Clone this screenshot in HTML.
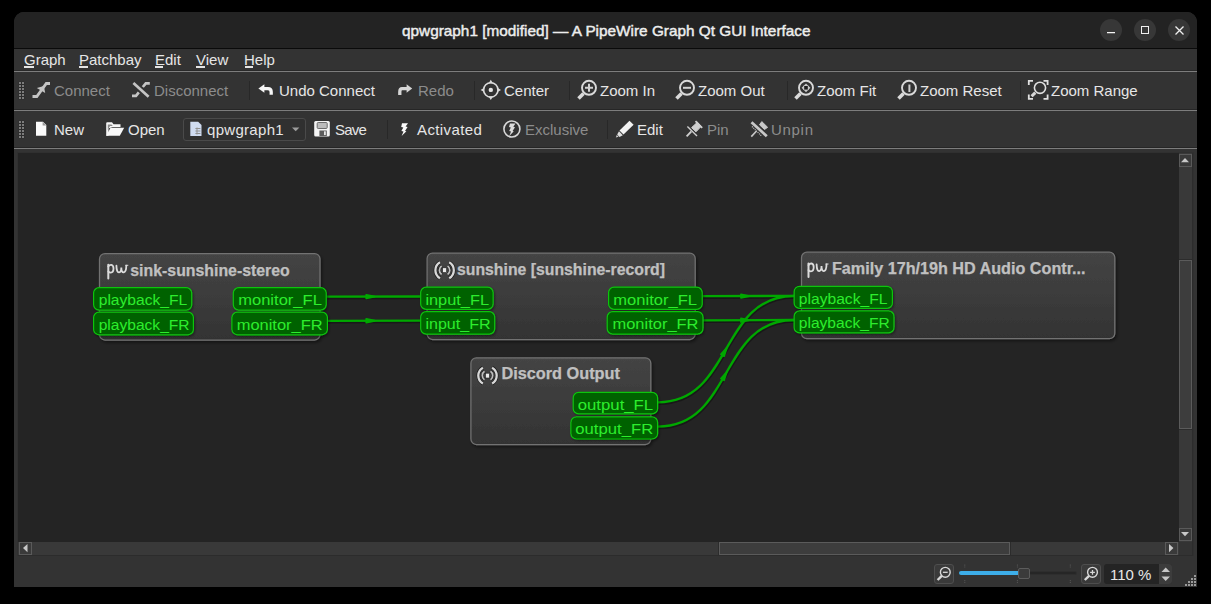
<!DOCTYPE html>
<html><head><meta charset="utf-8">
<style>
*{box-sizing:border-box}
html,body{margin:0;padding:0}
body{width:1211px;height:604px;overflow:hidden;position:relative;background:#000;font-family:"Liberation Sans",sans-serif;}
.a{position:absolute}
.t{position:absolute;white-space:nowrap;font-size:15px;line-height:15px;color:#e6e6e6}
.dis{color:#8c8c8c}
.sep{position:absolute;width:1px;background:#262626;border-right:1px solid #3c3c3c}
.port{position:absolute;height:24px;border:1.3px solid #0bc80b;background:#006100;border-radius:6px;color:#2df02d;font-size:15.5px;line-height:15px;white-space:nowrap}
.port span{position:absolute;top:5px}
.node{position:absolute;border:1px solid #656565;border-radius:6px;background:linear-gradient(#434343,#363636 60%,#303030)}
.nt{position:absolute;font-weight:bold;font-size:16px;line-height:16px;color:#c9c9c9;white-space:nowrap}
svg{position:absolute;overflow:visible}
.sb{position:absolute;width:13px;height:13px;background:#3a3a3a;border:1px solid #5a5a5a}
.btn{position:absolute;width:20px;height:20px;background:#3a3a3a;border:1px solid #4e4e4e;border-radius:3px}
</style></head><body>

<!-- window -->
<div class="a" id="win" style="left:14px;top:12px;width:1183px;height:575px;background:#333;border-radius:10px 10px 0 0;overflow:hidden">
  <div class="a" style="left:0;top:0;width:1183px;height:36px;background:#232323"></div>
  <div class="a" style="left:0;top:36px;width:1183px;height:1px;background:#0a0a0a"></div>
</div>

<!-- title -->
<div class="t" style="left:402px;top:23px;font-size:15.35px;line-height:15px;color:#ededed;-webkit-text-stroke:0.45px #ededed">qpwgraph1 [modified] — A PipeWire Graph Qt GUI Interface</div>
<div class="a" style="left:1100px;top:19px;width:22px;height:22px;border-radius:50%;background:#373737"></div>
<div class="a" style="left:1134px;top:19px;width:22px;height:22px;border-radius:50%;background:#373737"></div>
<div class="a" style="left:1168px;top:19px;width:22px;height:22px;border-radius:50%;background:#373737"></div>
<div class="a" style="left:1107px;top:32px;width:8px;height:1px;background:#f4f4f4;box-shadow:0 0.5px 0 #9a9a9a"></div>
<div class="a" style="left:1141px;top:26px;width:8px;height:8px;border:1.4px solid #f0f0f0"></div>
<svg style="left:1175px;top:26px" width="9" height="9"><path d="M0.5 0.5L8.5 8.5M8.5 0.5L0.5 8.5" stroke="#f0f0f0" stroke-width="1.3"/></svg>

<!-- menubar lines -->
<div class="a" style="left:14px;top:70px;width:1183px;height:1px;background:#292929"></div>
<div class="a" style="left:14px;top:71px;width:1183px;height:1px;background:#7d7d7d"></div>
<div class="a" style="left:14px;top:109px;width:1183px;height:1px;background:#262626"></div>
<div class="a" style="left:14px;top:110px;width:1183px;height:1px;background:#7d7d7d"></div>
<div class="a" style="left:14px;top:147px;width:1183px;height:1px;background:#262626"></div>
<div class="a" style="left:14px;top:148px;width:1183px;height:1px;background:#7d7d7d"></div>

<!-- menu -->
<div class="t" style="left:24px;top:52px">Graph</div>
<div class="t" style="left:79px;top:52px">Patchbay</div>
<div class="t" style="left:155px;top:52px">Edit</div>
<div class="t" style="left:196px;top:52px">View</div>
<div class="t" style="left:244px;top:52px">Help</div>
<div class="a" style="left:24px;top:66px;width:10px;height:2px;background:#e4e4e4"></div>
<div class="a" style="left:79px;top:66px;width:9px;height:2px;background:#e4e4e4"></div>
<div class="a" style="left:155px;top:66px;width:8px;height:2px;background:#e4e4e4"></div>
<div class="a" style="left:196px;top:66px;width:9px;height:2px;background:#e4e4e4"></div>
<div class="a" style="left:245px;top:66px;width:8px;height:2px;background:#e4e4e4"></div>


<!-- toolbar texts -->
<div class="t dis" style="left:54px;top:83px">Connect</div>
<div class="t dis" style="left:154px;top:83px">Disconnect</div>
<div class="t" style="left:279px;top:83px">Undo Connect</div>
<div class="t dis" style="left:418px;top:83px">Redo</div>
<div class="t" style="left:504px;top:83px">Center</div>
<div class="t" style="left:600px;top:83px">Zoom In</div>
<div class="t" style="left:698px;top:83px">Zoom Out</div>
<div class="t" style="left:817px;top:83px">Zoom Fit</div>
<div class="t" style="left:920px;top:83px">Zoom Reset</div>
<div class="t" style="left:1051px;top:83px">Zoom Range</div>

<div class="t" style="left:54px;top:122px">New</div>
<div class="t" style="left:128px;top:122px">Open</div>
<div class="a" style="left:183px;top:118px;width:123px;height:23px;border:1px solid #4a4a4a;border-radius:3px;background:#303030"></div>
<div class="t" style="left:207px;top:122px;letter-spacing:0.3px">qpwgraph1</div>
<div class="t" style="left:335px;top:122px;letter-spacing:-0.8px">Save</div>
<div class="t" style="left:417px;top:122px;letter-spacing:0.4px">Activated</div>
<div class="t dis" style="left:525px;top:122px">Exclusive</div>
<div class="t" style="left:637px;top:122px">Edit</div>
<div class="t dis" style="left:707px;top:122px">Pin</div>
<div class="t dis" style="left:771px;top:122px;letter-spacing:0.7px">Unpin</div>

<!-- separators -->
<div class="a" style="left:249px;top:81px;width:1px;height:19px;background:#282828"></div>
<div class="a" style="left:474px;top:81px;width:1px;height:19px;background:#282828"></div>
<div class="a" style="left:569px;top:81px;width:1px;height:19px;background:#282828"></div>
<div class="a" style="left:787px;top:81px;width:1px;height:19px;background:#282828"></div>
<div class="a" style="left:1020px;top:81px;width:1px;height:19px;background:#282828"></div>
<div class="a" style="left:387px;top:120px;width:1px;height:19px;background:#282828"></div>
<div class="a" style="left:607px;top:120px;width:1px;height:19px;background:#282828"></div>

<svg style="left:0;top:0" width="1211" height="604" viewBox="0 0 1211 604">
 <defs>
  <pattern id="grip" x="19" y="0" width="3" height="3" patternUnits="userSpaceOnUse"><rect width="2" height="2" fill="#7b7b7b"/></pattern>
 </defs>
 <!-- grips -->
 <rect x="19" y="82" width="2" height="2" fill="#7c7c7c" stroke="#262626" stroke-width="0.5" paint-order="stroke"/><rect x="22" y="82" width="2" height="2" fill="#7c7c7c" stroke="#262626" stroke-width="0.5" paint-order="stroke"/><rect x="19" y="85" width="2" height="2" fill="#7c7c7c" stroke="#262626" stroke-width="0.5" paint-order="stroke"/><rect x="22" y="85" width="2" height="2" fill="#7c7c7c" stroke="#262626" stroke-width="0.5" paint-order="stroke"/><rect x="19" y="88" width="2" height="2" fill="#7c7c7c" stroke="#262626" stroke-width="0.5" paint-order="stroke"/><rect x="22" y="88" width="2" height="2" fill="#7c7c7c" stroke="#262626" stroke-width="0.5" paint-order="stroke"/><rect x="19" y="91" width="2" height="2" fill="#7c7c7c" stroke="#262626" stroke-width="0.5" paint-order="stroke"/><rect x="22" y="91" width="2" height="2" fill="#7c7c7c" stroke="#262626" stroke-width="0.5" paint-order="stroke"/><rect x="19" y="94" width="2" height="2" fill="#7c7c7c" stroke="#262626" stroke-width="0.5" paint-order="stroke"/><rect x="22" y="94" width="2" height="2" fill="#7c7c7c" stroke="#262626" stroke-width="0.5" paint-order="stroke"/><rect x="19" y="97" width="2" height="2" fill="#7c7c7c" stroke="#262626" stroke-width="0.5" paint-order="stroke"/><rect x="22" y="97" width="2" height="2" fill="#7c7c7c" stroke="#262626" stroke-width="0.5" paint-order="stroke"/>
 <rect x="19" y="121" width="2" height="2" fill="#7c7c7c" stroke="#262626" stroke-width="0.5" paint-order="stroke"/><rect x="22" y="121" width="2" height="2" fill="#7c7c7c" stroke="#262626" stroke-width="0.5" paint-order="stroke"/><rect x="19" y="124" width="2" height="2" fill="#7c7c7c" stroke="#262626" stroke-width="0.5" paint-order="stroke"/><rect x="22" y="124" width="2" height="2" fill="#7c7c7c" stroke="#262626" stroke-width="0.5" paint-order="stroke"/><rect x="19" y="127" width="2" height="2" fill="#7c7c7c" stroke="#262626" stroke-width="0.5" paint-order="stroke"/><rect x="22" y="127" width="2" height="2" fill="#7c7c7c" stroke="#262626" stroke-width="0.5" paint-order="stroke"/><rect x="19" y="130" width="2" height="2" fill="#7c7c7c" stroke="#262626" stroke-width="0.5" paint-order="stroke"/><rect x="22" y="130" width="2" height="2" fill="#7c7c7c" stroke="#262626" stroke-width="0.5" paint-order="stroke"/><rect x="19" y="133" width="2" height="2" fill="#7c7c7c" stroke="#262626" stroke-width="0.5" paint-order="stroke"/><rect x="22" y="133" width="2" height="2" fill="#7c7c7c" stroke="#262626" stroke-width="0.5" paint-order="stroke"/><rect x="19" y="136" width="2" height="2" fill="#7c7c7c" stroke="#262626" stroke-width="0.5" paint-order="stroke"/><rect x="22" y="136" width="2" height="2" fill="#7c7c7c" stroke="#262626" stroke-width="0.5" paint-order="stroke"/>
 <g fill="none" stroke-linecap="butt" stroke-linejoin="miter">
 <!-- connect -->
 <path d="M32.5 96.5H36.8L46.3 83.5H50" stroke="#c4c4c4" stroke-width="2.8"/>
 <path d="M36.8 87.9L43.9 85.9L45.2 93Z" fill="#c4c4c4" stroke="none"/>
 <!-- disconnect -->
 <path d="M133.4 83L148.6 96.8" stroke="#c4c4c4" stroke-width="2.7"/>
 <path d="M142.8 87L145.8 83.3H149.8M138.8 92.3L136 95.8H132" stroke="#c4c4c4" stroke-width="2.7"/>
 <!-- undo -->
 <path d="M263 88.6H268Q271.2 88.6 271.2 92V94.8" stroke="#f6f6f6" stroke-width="3.3"/>
 <path d="M258.4 88.5L264.4 84.2V92.8Z" fill="#f6f6f6" stroke="none"/>
 <!-- redo -->
 <path d="M407 88.6H402Q399.8 88.6 399.8 92V94.9" stroke="#d6d6d6" stroke-width="3.3"/>
 <path d="M412.2 88.5L406.6 84.2V92.8Z" fill="#d6d6d6" stroke="none"/>
 <!-- center -->
 <circle cx="490.8" cy="89.9" r="7.2" stroke="#dcdcdc" stroke-width="1.6"/>
 <circle cx="490.8" cy="89.9" r="2.2" fill="#e6e6e6" stroke="none"/>
 <path d="M490.8 79.7L488.6 83.2H493ZM490.8 100.1L488.6 96.6H493ZM480.6 89.9L484.1 87.7V92.1ZM501 89.9L497.5 87.7V92.1Z" fill="#dcdcdc" stroke="none"/>
 <!-- zoom lenses -->
 <g id="lens" stroke="#dadada">
  <circle cx="589" cy="87.8" r="7" stroke-width="1.9"/>
  <path d="M583.5 93.5L578.5 98.5" stroke-width="3.6"/>
 </g>
 <path d="M585 87.8H593M589 83.8V91.8" stroke="#d2d2d2" stroke-width="2"/>
 <use href="#lens" x="98" y="0"/>
 <path d="M683 87.8H691" stroke="#d2d2d2" stroke-width="2"/>
 <use href="#lens" x="217" y="0"/>
 <path d="M806 83.4L808.6 86V89.6L806 92.2L803.4 89.6V86Z" fill="#c8c8c8" stroke="none"/>
 <path d="M801.6 87.8L804 85.4V90.2ZM810.4 87.8L808 85.4V90.2Z" fill="#c8c8c8" stroke="none"/>
 <rect x="804.2" y="86" width="3.6" height="3.6" fill="#1e1e1e" stroke="none"/>
 <use href="#lens" x="320" y="0"/>
 <path d="M909.4 84.5V92" stroke="#cfcfcf" stroke-width="2"/>
 <!-- zoom range -->
 <path d="M1028.8 85V80.9H1033M1043.5 80.9H1047.6V85M1047.6 94.6V98.8H1043.5M1033 98.8H1028.8V94.6" stroke="#e0e0e0" stroke-width="1.8"/>
 <circle cx="1040" cy="87.8" r="5.6" stroke="#e0e0e0" stroke-width="1.6"/>
 <path d="M1035.3 92.6L1031.6 96.3" stroke="#d8d8d8" stroke-width="3"/>
 </g>
 <!-- new -->
 <path d="M36 121.8H43L46.3 125V135.8H36Z" fill="#fafafa"/>
 <path d="M42.6 121.8V125.4H46.3Z" fill="#9a9a9a"/>
 <!-- open -->
 <path d="M106.2 135.7V123.2Q106.2 122.2 107.2 122.2H112L113.5 124.2H120.5V127H112.5L108.5 128.5V135.7Z" fill="#f6f6f6"/>
 <path d="M106.2 135.7L110.5 127.8H124.2L119.8 135.7Z" fill="#f8f8f8"/>
 <path d="M107.8 130V124.5H111.5L112.8 126H110Z" fill="#8a8a8a"/>
 <!-- combo icon -->
 <path d="M190.3 121.8H198.2L201.5 125V136H190.3Z" fill="#cfdbf0"/>
 <path d="M195.4 128.5h5M195.4 131h5M195.4 133.5h5M197 127.5v7" stroke="#909090" stroke-width="1" fill="none"/>
 <path d="M292 127.4H299.4L295.7 131.3Z" fill="#9c9c9c"/>
 <!-- save -->
 <rect x="314.2" y="121" width="15.6" height="15.6" rx="1.5" fill="#f4f4f4"/>
 <rect x="317.2" y="122.5" width="10" height="6" rx="1" fill="#bcbcbc" stroke="#6c6c6c" stroke-width="1"/>
 <rect x="319.4" y="130.5" width="7.4" height="5.5" fill="#5c5c5c"/>
 <rect x="324" y="131.3" width="1.8" height="3.8" fill="#e8e8e8"/>
 <!-- activated -->
 <path d="M402 123.2H408L405.6 126.6L407.6 127L405 131L406.4 131.2L401.6 136L403.5 131.4L401.4 131L403.3 127.5L401.2 127.1Z" fill="#fbfbfb"/>
 <!-- exclusive -->
 <circle cx="511.9" cy="129" r="8" fill="none" stroke="#d8d8d8" stroke-width="1.6"/>
 <path d="M510 123.5H515.5L513.3 126.8L515 127.2L512.6 131L513.8 131.2L509.3 136L511 131.5L509.2 131.1L510.8 127.5L509 127.1Z" fill="#dcdcdc"/>
 <!-- edit pencil -->
 <path d="M629.5 120.8L633.6 124.8L623.5 134.5L619.5 130.6Z" fill="#f2f2f2"/>
 <path d="M619 131.3L622.8 135.2L619.5 137L617.2 134.6Z" fill="#e0e0e0"/>
 <path d="M616.8 135L618.6 136.8L615.8 137.6Z" fill="#d0d0d0"/>
 <!-- pin -->
 <g stroke="#cfcfcf" fill="none">
  <path d="M686.6 136.3L691.3 131.5" stroke-width="1.8"/>
  <path d="M687.4 126.6L697 136" stroke-width="1.4"/>
  <path d="M691.6 127.6L697.4 122.3L701.2 126.3L696 131.8Z" fill="#cfcfcf" stroke-width="1"/>
  <path d="M695.5 121.2L702.2 127.8" stroke-width="1.8"/>
 </g>
 <!-- unpin -->
 <g stroke="#c8c8c8" fill="none">
  <path d="M751.5 122.3L766.8 136.2" stroke-width="2.8"/>
  <path d="M752 126.5L761.5 136" stroke-width="1.2" stroke-dasharray="1 1"/>
  <path d="M751.3 136.6L756.5 131" stroke-width="1.6"/>
  <path d="M759.5 124.8L761.8 121.6L767.6 127.3L764.5 129.5Z" fill="#c8c8c8" stroke-width="1"/>
 </g>
</svg>


<!-- canvas -->
<div class="a" style="left:17px;top:152px;width:1177px;height:404px;background:#303030"></div>
<div class="a" style="left:18px;top:153px;width:1161px;height:389px;background:#242424"></div>
<!-- vertical scrollbar -->
<div class="a" style="left:1179px;top:153px;width:14px;height:389px;background:#393939;border-right:1px solid #2c2c2c"></div>
<div class="sb" style="left:1179px;top:154px"><svg style="left:0.9px;top:2.8px" width="9" height="6"><path d="M4 0L8 4.2H0Z" fill="#c8c8c8"/></svg></div>
<div class="a" style="left:1179px;top:259px;width:13px;height:1px;background:#2c2c2c"></div>
<div class="a" style="left:1179px;top:260px;width:13px;height:169px;background:#3d3d3d;border:1px solid #5b5b5b"></div>
<div class="a" style="left:1179px;top:429px;width:13px;height:1px;background:#2c2c2c"></div>
<div class="sb" style="left:1179px;top:528px"><svg style="left:1.2px;top:3px" width="9" height="6"><path d="M0 0H8L4 4.2Z" fill="#c8c8c8"/></svg></div>
<!-- horizontal scrollbar -->
<div class="a" style="left:18px;top:542px;width:1161px;height:14px;background:#393939;border-bottom:1px solid #2c2c2c"></div>
<div class="sb" style="left:19px;top:542px"><svg style="left:2.9px;top:1px" width="6" height="9"><path d="M0 4.1L4.5 0V8.3Z" fill="#c8c8c8"/></svg></div>
<div class="a" style="left:718px;top:542px;width:1px;height:13px;background:#2c2c2c"></div>
<div class="a" style="left:719px;top:542px;width:291px;height:13px;background:#3d3d3d;border:1px solid #5b5b5b"></div>
<div class="a" style="left:1010px;top:542px;width:1px;height:13px;background:#2c2c2c"></div>
<div class="sb" style="left:1165px;top:542px"><svg style="left:2.8px;top:1.2px" width="6" height="9"><path d="M4.4 4.1L0 0V8.3Z" fill="#c8c8c8"/></svg></div>
<div class="a" style="left:1179px;top:542px;width:14px;height:14px;background:#333;border-right:1px solid #2c2c2c;border-bottom:1px solid #2c2c2c"></div>

<!-- status bar -->
<div class="btn" style="left:934px;top:564px"></div>
<div class="btn" style="left:1081px;top:564px"></div>
<svg style="left:0;top:0" width="1211" height="604" viewBox="0 0 1211 604">
 <g fill="none" stroke="#d8d8d8">
  <circle cx="945.3" cy="572.3" r="4.9" stroke-width="1.4"/><path d="M941.8 575.8L937.6 580" stroke-width="2.4"/><path d="M942.9 572.3H947.7" stroke-width="1.3"/>
  <circle cx="1092.5" cy="572.3" r="4.9" stroke-width="1.4"/><path d="M1089 575.8L1084.8 580" stroke-width="2.4"/><path d="M1090.1 572.3H1094.9M1092.5 569.9V574.7" stroke-width="1.3"/>
 </g>
 <g stroke="#555" stroke-width="1" stroke-dasharray="1.2 0.8">
  <path d="M964.8 564.5V567.5M964.8 580V583M1017.4 564.5V567.5M1017.4 580V583M1070.3 564.5V567.5M1070.3 580V583"/>
 </g>
 <g fill="#9a9a9a">
  <rect x="1194" y="575" width="2" height="2"/>
  <rect x="1191" y="578" width="2" height="2"/><rect x="1194" y="578" width="2" height="2"/>
  <rect x="1188" y="581" width="2" height="2"/><rect x="1191" y="581" width="2" height="2"/><rect x="1194" y="581" width="2" height="2"/>
  <rect x="1185" y="584" width="2" height="2"/><rect x="1188" y="584" width="2" height="2"/><rect x="1191" y="584" width="2" height="2"/><rect x="1194" y="584" width="2" height="2"/>
 </g>
</svg>
<div class="a" style="left:959px;top:571px;width:118px;height:4px;background:#262626;border:1px solid #2e2e2e;border-radius:2px"></div>
<div class="a" style="left:959px;top:571px;width:61px;height:4px;background:#3daee9;border-radius:2px"></div>
<div class="a" style="left:1018px;top:568px;width:12px;height:11px;background:#3b3b3b;border:1px solid #5c5c5c;border-radius:2px"></div>
<div class="a" style="left:1104px;top:564px;width:68px;height:19.5px;background:#242424;border-radius:3px"></div>
<div class="t" style="left:1110px;top:567px;color:#e8e8e8">110 %</div>
<div class="a" style="left:1159px;top:564px;width:13px;height:19.5px;background:#3c3c3c;border-radius:0 3px 3px 0"></div>
<svg style="left:1161px;top:567px" width="10" height="15"><path d="M4.7 0.5L9 5H0.5Z M0.5 9.5H9L4.7 14Z" fill="#c6c6c6"/></svg>


<!-- CANVAS START -->
<svg style="left:0;top:0" width="1211" height="604" viewBox="0 0 1211 604">
<defs>
 <linearGradient id="ng" x1="0" y1="0" x2="0" y2="1"><stop offset="0" stop-color="#444"/><stop offset="1" stop-color="#333"/></linearGradient>
 <filter id="sh" x="-10%" y="-10%" width="120%" height="130%"><feDropShadow dx="1.5" dy="2" stdDeviation="1.8" flood-color="#000" flood-opacity="0.45"/></filter>
 <filter id="sh2" x="-10%" y="-20%" width="120%" height="150%"><feDropShadow dx="1.2" dy="1.5" stdDeviation="1.2" flood-color="#000" flood-opacity="0.4"/></filter>
 <clipPath id="cv"><rect x="18" y="153" width="1161" height="389"/></clipPath>
</defs>
<style>
.pt{font-family:"Liberation Sans",sans-serif;font-size:15.5px;fill:#2ded2d}
.nt{font-family:"Liberation Sans",sans-serif;font-size:16px;font-weight:bold;fill:#c0c0c0;stroke:#c0c0c0;stroke-width:0.25px}
</style>
<g clip-path="url(#cv)">
<path d="M327 296.7L420.5 296.5" transform="translate(0.6,1.4)" stroke="#151515" stroke-width="2.6" fill="none" opacity="0.8"/>
<path d="M327 320.9L420.5 320.6" transform="translate(0.6,1.4)" stroke="#151515" stroke-width="2.6" fill="none" opacity="0.8"/>
<path d="M703 296.2L794 295.9" transform="translate(0.6,1.4)" stroke="#151515" stroke-width="2.6" fill="none" opacity="0.8"/>
<path d="M703 320.3L794 320.0" transform="translate(0.6,1.4)" stroke="#151515" stroke-width="2.6" fill="none" opacity="0.8"/>
<path d="M658 402.3C733 402.3 719 296.0 794 296.0" transform="translate(0.6,1.4)" stroke="#151515" stroke-width="2.6" fill="none" opacity="0.8"/>
<path d="M658 426.6C733 426.6 719 320.0 794 320.0" transform="translate(0.6,1.4)" stroke="#151515" stroke-width="2.6" fill="none" opacity="0.8"/>
<path d="M327 296.7L420.5 296.5" stroke="#00a800" stroke-width="2.3" fill="none"/>
<path d="M327 320.9L420.5 320.6" stroke="#00a800" stroke-width="2.3" fill="none"/>
<path d="M703 296.2L794 295.9" stroke="#00a800" stroke-width="2.3" fill="none"/>
<path d="M703 320.3L794 320.0" stroke="#00a800" stroke-width="2.3" fill="none"/>
<path d="M658 402.3C733 402.3 719 296.0 794 296.0" stroke="#00a800" stroke-width="2.3" fill="none"/>
<path d="M658 426.6C733 426.6 719 320.0 794 320.0" stroke="#00a800" stroke-width="2.3" fill="none"/>
<path d="M374.75 296.60L366.25 298.42L366.25 294.82Z" fill="#00a800" stroke="#00a800" stroke-width="1.8" stroke-linejoin="round"/>
<path d="M374.75 320.75L366.26 322.58L366.24 318.98Z" fill="#00a800" stroke="#00a800" stroke-width="1.8" stroke-linejoin="round"/>
<path d="M749.50 296.05L741.01 297.88L740.99 294.28Z" fill="#00a800" stroke="#00a800" stroke-width="1.8" stroke-linejoin="round"/>
<path d="M749.50 320.15L741.01 321.98L740.99 318.38Z" fill="#00a800" stroke="#00a800" stroke-width="1.8" stroke-linejoin="round"/>
<path d="M726.75 347.85L724.08 356.12L720.95 354.33Z" fill="#00a800" stroke="#00a800" stroke-width="1.8" stroke-linejoin="round"/>
<path d="M726.74 372.00L724.09 380.27L720.96 378.48Z" fill="#00a800" stroke="#00a800" stroke-width="1.8" stroke-linejoin="round"/>
<rect x="99.5" y="253.5" width="220.5" height="86.5" rx="5.5" fill="url(#ng)" stroke="#727272" stroke-width="1.25" filter="url(#sh)"/>
<text x="130.3" y="275.5" class="nt" textLength="159.5" lengthAdjust="spacingAndGlyphs">sink-sunshine-stereo</text>
<rect x="93.6" y="287.6" width="98.10000000000001" height="22.49999999999999" rx="5.5" fill="#006200" stroke="#0cc40c" stroke-width="1.2" filter="url(#sh2)"/>
<text x="98.7" y="305.4" class="pt" textLength="88.6" lengthAdjust="spacingAndGlyphs">playback_FL</text>
<rect x="93.6" y="312.1" width="99.8" height="22.699999999999978" rx="5.5" fill="#006200" stroke="#0cc40c" stroke-width="1.2" filter="url(#sh2)"/>
<text x="98.7" y="329.9" class="pt" textLength="90.9" lengthAdjust="spacingAndGlyphs">playback_FR</text>
<rect x="233.29999999999998" y="287.6" width="92.90000000000002" height="22.49999999999999" rx="5.5" fill="#006200" stroke="#0cc40c" stroke-width="1.2" filter="url(#sh2)"/>
<text x="238.2" y="305.4" class="pt" textLength="83.7" lengthAdjust="spacingAndGlyphs">monitor_FL</text>
<rect x="231.9" y="312.1" width="95.49999999999999" height="22.699999999999978" rx="5.5" fill="#006200" stroke="#0cc40c" stroke-width="1.2" filter="url(#sh2)"/>
<text x="236.7" y="329.9" class="pt" textLength="86" lengthAdjust="spacingAndGlyphs">monitor_FR</text>
<rect x="427.1" y="253.0" width="268.1" height="86.5" rx="5.5" fill="url(#ng)" stroke="#727272" stroke-width="1.25" filter="url(#sh)"/>
<text x="457" y="274.7" class="nt" textLength="208" lengthAdjust="spacingAndGlyphs">sunshine [sunshine-record]</text>
<rect x="420.70000000000005" y="287.1" width="72.39999999999996" height="22.3" rx="5.5" fill="#006200" stroke="#0cc40c" stroke-width="1.2" filter="url(#sh2)"/>
<text x="425.4" y="304.9" class="pt" textLength="63.6" lengthAdjust="spacingAndGlyphs">input_FL</text>
<rect x="420.70000000000005" y="311.6" width="73.99999999999999" height="22.49999999999999" rx="5.5" fill="#006200" stroke="#0cc40c" stroke-width="1.2" filter="url(#sh2)"/>
<text x="425.4" y="329.4" class="pt" textLength="65.2" lengthAdjust="spacingAndGlyphs">input_FR</text>
<rect x="608.6" y="287.1" width="93.59999999999995" height="22.3" rx="5.5" fill="#006200" stroke="#0cc40c" stroke-width="1.2" filter="url(#sh2)"/>
<text x="613.3" y="304.9" class="pt" textLength="83.7" lengthAdjust="spacingAndGlyphs">monitor_FL</text>
<rect x="607.2" y="311.6" width="95.8" height="22.49999999999999" rx="5.5" fill="#006200" stroke="#0cc40c" stroke-width="1.2" filter="url(#sh2)"/>
<text x="612.5" y="329.4" class="pt" textLength="86" lengthAdjust="spacingAndGlyphs">monitor_FR</text>
<rect x="801.5" y="252.2" width="313.3" height="86.5" rx="5.5" fill="url(#ng)" stroke="#727272" stroke-width="1.25" filter="url(#sh)"/>
<text x="832" y="273.9" class="nt" textLength="253.5" lengthAdjust="spacingAndGlyphs">Family 17h/19h HD Audio Contr...</text>
<rect x="794.1" y="286.3" width="98.3" height="22.100000000000012" rx="5.5" fill="#006200" stroke="#0cc40c" stroke-width="1.2" filter="url(#sh2)"/>
<text x="798.8" y="303.8" class="pt" textLength="88.6" lengthAdjust="spacingAndGlyphs">playback_FL</text>
<rect x="794.1" y="310.90000000000003" width="99.90000000000002" height="21.99999999999999" rx="5.5" fill="#006200" stroke="#0cc40c" stroke-width="1.2" filter="url(#sh2)"/>
<text x="798.8" y="328.0" class="pt" textLength="90.9" lengthAdjust="spacingAndGlyphs">playback_FR</text>
<rect x="470.9" y="357.8" width="179.9" height="86.7" rx="5.5" fill="url(#ng)" stroke="#727272" stroke-width="1.25" filter="url(#sh)"/>
<text x="501.4" y="379.40000000000003" class="nt" textLength="118.5" lengthAdjust="spacingAndGlyphs">Discord Output</text>
<rect x="573.2" y="392.40000000000003" width="84.40000000000002" height="21.49999999999999" rx="5.5" fill="#006200" stroke="#0cc40c" stroke-width="1.2" filter="url(#sh2)"/>
<text x="577.7" y="409.6" class="pt" textLength="75.5" lengthAdjust="spacingAndGlyphs">output_FL</text>
<rect x="570.9" y="416.90000000000003" width="86.70000000000009" height="22.100000000000012" rx="5.5" fill="#006200" stroke="#0cc40c" stroke-width="1.2" filter="url(#sh2)"/>
<text x="575.3" y="433.9" class="pt" textLength="78" lengthAdjust="spacingAndGlyphs">output_FR</text>
<g fill="none" stroke="#dcdcdc" stroke-linecap="round">
<path d="M108.3 264.7V278.4" stroke-width="2"/>
<path d="M108.3 266.4Q109.8 264.59999999999997 111.3 264.79999999999995Q113.5 265.2 113.5 268.59999999999997Q113.5 272.59999999999997 110.8 272.59999999999997Q109.3 272.59999999999997 108.3 271.4" stroke-width="1.8"/>
<path d="M116.39999999999999 265.59999999999997Q116.6 272.79999999999995 119.1 272.4Q121.3 272.0 121.3 267.4Q121.39999999999999 272.59999999999997 123.69999999999999 272.4Q126.3 272.0 126.3 265.59999999999997" stroke-width="1.8"/>
<path d="M125.69999999999999 265.29999999999995H127.9" stroke-width="1"/>
</g><g fill="none" stroke="#dcdcdc" stroke-linecap="round">
<path d="M808.5 263.40000000000003V277.1" stroke-width="2"/>
<path d="M808.5 265.1Q810.0 263.3 811.5 263.5Q813.7 263.90000000000003 813.7 267.3Q813.7 271.3 811.0 271.3Q809.5 271.3 808.5 270.1" stroke-width="1.8"/>
<path d="M816.6 264.3Q816.8 271.5 819.3 271.1Q821.5 270.70000000000005 821.5 266.1Q821.6 271.3 823.9 271.1Q826.5 270.70000000000005 826.5 264.3" stroke-width="1.8"/>
<path d="M825.9 264.0H828.1" stroke-width="1"/>
</g><g fill="none">
<path d="M440.00 262.23A9.2 9.2 0 0 0 440.00 278.17M449.20 262.23A9.2 9.2 0 0 1 449.20 278.17" stroke="#1c1c1c" stroke-width="3.6"/>
<path d="M441.62 265.94A5.2 5.2 0 0 0 441.62 274.46M447.58 265.94A5.2 5.2 0 0 1 447.58 274.46" stroke="#1c1c1c" stroke-width="3.0"/>
<path d="M440.00 262.23A9.2 9.2 0 0 0 440.00 278.17M449.20 262.23A9.2 9.2 0 0 1 449.20 278.17" stroke="#d8d8d8" stroke-width="2.3"/>
<path d="M441.62 265.94A5.2 5.2 0 0 0 441.62 274.46M447.58 265.94A5.2 5.2 0 0 1 447.58 274.46" stroke="#bdbdbd" stroke-width="1.8"/>
<rect x="442.6" y="267.8" width="4" height="4.8" fill="#eaeaea" stroke="#1c1c1c" stroke-width="0.6"/>
</g><g fill="none">
<path d="M482.90 367.63A9.2 9.2 0 0 0 482.90 383.57M492.10 367.63A9.2 9.2 0 0 1 492.10 383.57" stroke="#1c1c1c" stroke-width="3.6"/>
<path d="M484.52 371.34A5.2 5.2 0 0 0 484.52 379.86M490.48 371.34A5.2 5.2 0 0 1 490.48 379.86" stroke="#1c1c1c" stroke-width="3.0"/>
<path d="M482.90 367.63A9.2 9.2 0 0 0 482.90 383.57M492.10 367.63A9.2 9.2 0 0 1 492.10 383.57" stroke="#d8d8d8" stroke-width="2.3"/>
<path d="M484.52 371.34A5.2 5.2 0 0 0 484.52 379.86M490.48 371.34A5.2 5.2 0 0 1 490.48 379.86" stroke="#bdbdbd" stroke-width="1.8"/>
<rect x="485.5" y="373.20000000000005" width="4" height="4.8" fill="#eaeaea" stroke="#1c1c1c" stroke-width="0.6"/>
</g>
</g>
</svg>
<!-- CANVAS END -->
</body></html>
